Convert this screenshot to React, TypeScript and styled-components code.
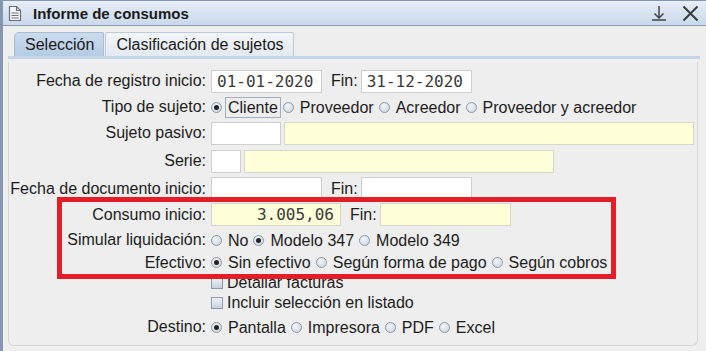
import React from 'react';
import styled, {createGlobalStyle} from 'styled-components';

const GlobalStyle = createGlobalStyle`
  html, body {
    margin: 0;
    padding: 0;
    background: #eeeeee;
  }
  body {
    font-family: "Liberation Sans", Arial, sans-serif;
    font-size: 16px;
    color: #1c1c1c;
  }
`;

type RadioOpt = {label: string; checked?: boolean; focused?: boolean};

const Radio: React.FC<RadioOpt> = ({label, checked, focused}) => (
  <RadioItem>
    <RadioDot $checked={checked} />
    <RadioText $focused={focused}>{label}</RadioText>
  </RadioItem>
);

const RadioGroup: React.FC<{options: RadioOpt[]}> = ({options}) => (
  <Field>
    {options.map(o => (
      <Radio key={o.label} {...o} />
    ))}
  </Field>
);

export default function App() {
  return (
    <>
      <GlobalStyle />
      <Window>
        <TitleBar>
          <DocIcon viewBox="0 0 14 17">
            <path d="M1.5 1.5h7l4 4v10h-11z" fill="#f4f6f8" stroke="#6b6f75" strokeWidth="1.2" />
            <path d="M8.5 1.5v4h4" fill="none" stroke="#6b6f75" strokeWidth="1.2" />
            <path d="M3.5 8h7M3.5 10.5h7M3.5 13h7" stroke="#6b6f75" strokeWidth="1" />
          </DocIcon>
          <Title>Informe de consumos</Title>
          <TitleButtons>
            <svg width="16" height="16" viewBox="0 0 16 16">
              <path d="M8 1v12M3.5 8.5L8 13l4.5-4.5M1 15h14" fill="none" stroke="#404448" strokeWidth="1.5" />
            </svg>
            <svg width="17" height="17" viewBox="0 0 17 17">
              <path d="M1.5 1.5l14 14M15.5 1.5l-14 14" fill="none" stroke="#383b3f" strokeWidth="2" />
            </svg>
          </TitleButtons>
        </TitleBar>

        <TabStrip>
          <Tab $active>Selección</Tab>
          <Tab>Clasificación de sujetos</Tab>
        </TabStrip>

        <Panel>
          <Row $h={26}>
            <Label>Fecha de registro inicio:</Label>
            <Field>
              <Input $w={111}>01-01-2020</Input>
              <FinLabel>Fin:</FinLabel>
              <Input $w={111}>31-12-2020</Input>
            </Field>
          </Row>
          <Row $h={26}>
            <Label>Tipo de sujeto:</Label>
            <RadioGroup
              options={[
                {label: 'Cliente', checked: true, focused: true},
                {label: 'Proveedor'},
                {label: 'Acreedor'},
                {label: 'Proveedor y acreedor'},
              ]}
            />
          </Row>
          <Row $h={26}>
            <Label>Sujeto pasivo:</Label>
            <Field>
              <Input $w={70} />
              <Input $w={410} $yellow />
            </Field>
          </Row>
          <Row $h={30}>
            <Label>Serie:</Label>
            <Field>
              <Input $w={30} />
              <Input $w={310} $yellow />
            </Field>
          </Row>
          <Row $h={25}>
            <Label>Fecha de documento inicio:</Label>
            <Field>
              <Input $w={111} />
              <FinLabel>Fin:</FinLabel>
              <Input $w={111} />
            </Field>
          </Row>
          <Row $h={27}>
            <Label>Consumo inicio:</Label>
            <Field>
              <Input $w={130} $yellow $right>
                3.005,06
              </Input>
              <FinLabel>Fin:</FinLabel>
              <Input $w={131} $yellow />
            </Field>
          </Row>
          <Row $h={24}>
            <Label>Simular liquidación:</Label>
            <RadioGroup
              options={[{label: 'No'}, {label: 'Modelo 347', checked: true}, {label: 'Modelo 349'}]}
            />
          </Row>
          <Row $h={21}>
            <Label>Efectivo:</Label>
            <RadioGroup
              options={[
                {label: 'Sin efectivo', checked: true},
                {label: 'Según forma de pago'},
                {label: 'Según cobros'},
              ]}
            />
          </Row>
          <Row $h={20}>
            <Label />
            <Field>
              <Check />
              <CheckText>Detallar facturas</CheckText>
            </Field>
          </Row>
          <Row $h={20}>
            <Label />
            <Field>
              <Check />
              <CheckText>Incluir selección en listado</CheckText>
            </Field>
          </Row>
          <Row $h={28}>
            <Label>Destino:</Label>
            <RadioGroup
              options={[
                {label: 'Pantalla', checked: true},
                {label: 'Impresora'},
                {label: 'PDF'},
                {label: 'Excel'},
              ]}
            />
          </Row>
        </Panel>

        <Highlight />
      </Window>
    </>
  );
}

const Window = styled.div`
  position: relative;
  width: 703px;
  height: 350px;
  border-left: 3px solid #8696ae;
  border-top: 1px solid #8696ae;
  background: #eeeeee;
  overflow: hidden;
`;

const TitleBar = styled.div`
  display: flex;
  align-items: center;
  height: 24px;
  padding-left: 5px;
  background: linear-gradient(#e6eef8, #c9d9eb);
  border-bottom: 1px solid #8c9bb1;
`;

const DocIcon = styled.svg`
  width: 14px;
  height: 17px;
`;

const Title = styled.div`
  margin-left: 11px;
  font-weight: bold;
  font-size: 15px;
  color: #1a1a1a;
`;

const TitleButtons = styled.div`
  margin-left: auto;
  display: flex;
  align-items: center;
  gap: 15px;
  padding-right: 7px;
`;

const TabStrip = styled.div`
  display: flex;
  align-items: flex-end;
  height: 24px;
  margin: 6px 6px 0 5px;
  padding-left: 6px;
  border-bottom: 3px solid #c3d5e8;
`;

const Tab = styled.div<{$active?: boolean}>`
  height: 23px;
  line-height: 23px;
  padding: 0 9px 0 10px;
  margin-right: 1px;
  border: 1px solid ${p => (p.$active ? '#a6bed8' : '#bccbdb')};
  border-bottom: none;
  border-radius: ${p => (p.$active ? '5px 2px 0 0' : '2px 2px 0 0')};
  background: ${p =>
    p.$active ? 'linear-gradient(#cadbee, #b5cce4)' : 'linear-gradient(#f2f5f9, #e4eaf1)'};
  color: #1a1a1a;
`;

const Panel = styled.div`
  display: flex;
  flex-direction: column;
  margin: 3px 8px 0 5px;
  padding-top: 6px;
  height: 277px;
  border: 1px solid #d6d6d6;
  border-top: none;
  border-radius: 0 0 6px 6px;
`;

const Row = styled.div<{$h: number}>`
  display: flex;
  align-items: center;
  height: ${p => p.$h}px;
  flex-shrink: 0;
`;

const Label = styled.div`
  width: 202px;
  flex-shrink: 0;
  text-align: right;
  padding-right: 5px;
  box-sizing: border-box;
  white-space: nowrap;
`;

const Field = styled.div`
  display: flex;
  align-items: center;
  white-space: nowrap;
`;

const Input = styled.div<{$w: number; $yellow?: boolean; $right?: boolean}>`
  width: ${p => p.$w}px;
  height: 23px;
  box-sizing: border-box;
  margin-right: 3px;
  padding: 0 6px 0 5px;
  border: 1px solid ${p => (p.$yellow ? '#d8d8c4' : '#cfcfcf')};
  background: ${p => (p.$yellow ? '#ffffd9' : '#ffffff')};
  font-family: "DejaVu Sans Mono", "Liberation Mono", monospace;
  font-size: 16px;
  line-height: 21px;
  color: #3a3a3a;
  text-align: ${p => (p.$right ? 'right' : 'left')};
`;

const FinLabel = styled.span`
  margin: 0 3px 0 6px;
`;

const RadioItem = styled.span`
  display: inline-flex;
  align-items: center;
  margin-right: 2px;
`;

const RadioDot = styled.span<{$checked?: boolean}>`
  position: relative;
  width: 11px;
  height: 11px;
  box-sizing: border-box;
  border-radius: 50%;
  border: 1px solid #8e9aa8;
  background: radial-gradient(circle at 40% 35%, #f4f7fb, #c4d0de);
  margin-right: 3px;
  &::after {
    content: '';
    display: ${p => (p.$checked ? 'block' : 'none')};
    position: absolute;
    left: 2px;
    top: 2px;
    width: 5px;
    height: 5px;
    border-radius: 50%;
    background: #222;
  }
`;

const RadioText = styled.span<{$focused?: boolean}>`
  padding: 0 2px;
  border: 1px solid ${p => (p.$focused ? '#a0aebf' : 'transparent')};
  line-height: 19px;
`;

const Check = styled.span`
  width: 12px;
  height: 12px;
  box-sizing: border-box;
  border: 1px solid #8e9aa8;
  background: linear-gradient(#eef2f7, #c8d3e0);
  margin-right: 4px;
`;

const CheckText = styled.span``;

const Highlight = styled.div`
  position: absolute;
  left: 54px;
  top: 196px;
  width: 549px;
  height: 72px;
  border: 5px solid #e51d27;
  pointer-events: none;
`;
